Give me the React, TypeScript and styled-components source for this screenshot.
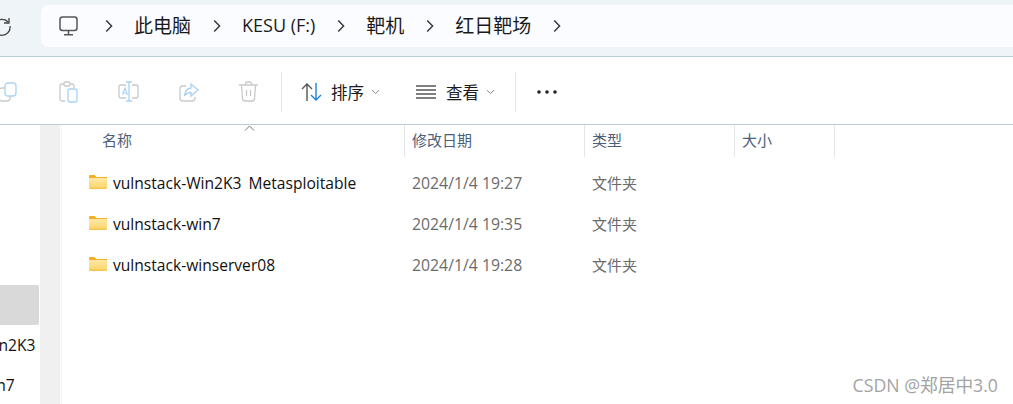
import styled, { createGlobalStyle } from 'styled-components';

const GlobalStyle = createGlobalStyle`
    html, body {
        margin: 0;
        padding: 0;
        background: #fff;
        overflow: hidden;
    }
    body {
        font-family: "Open Sans", "Noto Sans CJK SC", sans-serif;
    }
`;

const CJK = '"Noto Sans CJK SC", sans-serif';
const COLUMNS = '343px 180px 150px 100px';

const Window = styled.div`
    position: relative;
    width: 1013px;
    height: 404px;
    overflow: hidden;
    display: flex;
    flex-direction: column;
`;

const AddressRow = styled.div`
    height: 56px;
    flex: none;
    display: flex;
    background: #eff4f9;
    border-bottom: 1px solid #b9ccd9;
`;

const RefreshSlot = styled.div`
    width: 41px;
    flex: none;
    overflow: hidden;
    display: flex;
    justify-content: flex-end;
    padding: 16px 29px 0 0;
    box-sizing: border-box;

    svg {
        flex: none;
    }
`;

const AddressBox = styled.div`
    flex: 1;
    height: 42px;
    margin-top: 5px;
    background: #fafcff;
    border-radius: 7px 0 0 7px;
    display: flex;
    align-items: center;
    padding-left: 18px;
    gap: 21.5px;

    svg:first-child {
        margin-right: 5px;
    }
`;

const Crumb = styled.span<{ $latin?: boolean }>`
    font-family: ${(p) => (p.$latin ? '"Open Sans", sans-serif' : CJK)};
    font-size: ${(p) => (p.$latin ? '18px' : '19px')};
    color: #1a1a1a;
    line-height: 24px;
    white-space: nowrap;
    padding-bottom: 2px;
`;

const Toolbar = styled.div`
    height: 68px;
    flex: none;
    display: flex;
    align-items: center;
    background: #fff;
    border-bottom: 1px solid #b9ccd9;
    padding-top: 2px;
    box-sizing: border-box;
    overflow: hidden;
`;

const ActionIcons = styled.div`
    display: flex;
    align-items: center;
    gap: 40px;
    margin-left: -2px;

    svg:first-child {
        margin-right: 2px;
    }
`;

const Divider = styled.div<{ $left: number; $right: number }>`
    width: 1px;
    height: 40px;
    background: #e6e6e6;
    margin: 0 ${(p) => p.$right}px 0 ${(p) => p.$left}px;
    flex: none;
`;

const ToolButton = styled.div<{ $width: number }>`
    display: flex;
    align-items: center;
    width: ${(p) => p.$width}px;
    flex: none;
`;

const ToolLabel = styled.span<{ $gap: number }>`
    font-family: ${CJK};
    font-size: 16.5px;
    color: #1a1a1a;
    margin-left: ${(p) => p.$gap}px;
    line-height: 22px;
`;

const Caret = styled.span`
    display: flex;
    margin-left: 7px;
`;

const Body = styled.div`
    flex: 1;
    display: flex;
    min-height: 0;
`;

const Sidebar = styled.div`
    width: 40px;
    flex: none;
    overflow: hidden;
    padding-top: 160px;
    box-sizing: border-box;
`;

const SideItem = styled.div<{ $selected?: boolean }>`
    height: 40px;
    width: 39px;
    border-radius: 0 2px 2px 0;
    background: ${(p) => (p.$selected ? '#d9d9d9' : 'transparent')};
    display: flex;
    align-items: center;
    white-space: nowrap;
    overflow: hidden;
`;

const SideLabel = styled.span`
    font-size: 15.6px;
    color: #111;
    margin-left: -93px;
`;

const Track = styled.div`
    width: 20px;
    flex: none;
    background: #f0f0f0;
`;

const Gutter = styled.div`
    width: 1px;
    flex: none;
    margin-left: 1px;
    background: #f5f5f5;
`;

const Files = styled.div`
    flex: 1;
    min-width: 0;
`;

const HeaderRow = styled.div`
    display: grid;
    grid-template-columns: ${COLUMNS};
    height: 32px;
    margin-bottom: 5px;
`;

const HeaderCell = styled.div<{ $first?: boolean }>`
    font-family: ${CJK};
    font-size: 15px;
    color: #4c607a;
    display: flex;
    align-items: center;
    padding: 0 0 3px ${(p) => (p.$first ? 40 : 7)}px;
    border-right: ${(p) => (p.$first ? 'none' : '1px solid #e5e5e5')};
    box-shadow: ${(p) => (p.$first ? 'inset -1px 0 0 #e5e5e5' : 'none')};
`;

const FileRow = styled.div`
    display: grid;
    grid-template-columns: ${COLUMNS};
    height: 41px;
    align-items: center;
`;

const NameCell = styled.div`
    display: flex;
    align-items: center;
    padding-left: 27px;
    gap: 6px;
    font-size: 15.6px;
    word-spacing: 3px;
    color: #111;
    white-space: nowrap;

    svg {
        margin-bottom: 2px;
    }
`;

const DateCell = styled.div`
    font-size: 15.8px;
    color: #6b6b6b;
    padding-left: 7px;
`;

const TypeCell = styled.div`
    font-family: ${CJK};
    font-size: 15px;
    color: #6b6b6b;
    padding-left: 7px;
`;

const SortMark = styled.svg`
    position: absolute;
    left: 244px;
    top: 125px;
`;

const Watermark = styled.div`
    position: absolute;
    right: 15px;
    top: 373px;
    font-family: "Open Sans", ${CJK};
    font-size: 17.7px;
    line-height: 24px;
    color: #a3a3a3;
    white-space: nowrap;
`;

const Chevron = () => (
    <svg width="8" height="14" viewBox="0 0 8 14" fill="none">
        <path d="M1.2 1.5 6.6 7 1.2 12.5" stroke="#333" strokeWidth="1.4" />
    </svg>
);

const SmallCaret = () => (
    <svg width="9" height="6" viewBox="0 0 9 6" fill="none">
        <path d="M1 1.2 4.5 4.6 8 1.2" stroke="#888" strokeWidth="1" />
    </svg>
);

const Folder = () => (
    <svg width="18" height="14" viewBox="0 0 18 14">
        <defs>
            <linearGradient id="folderFront" x1="0" y1="0" x2="0" y2="1">
                <stop offset="0" stopColor="#ffe9a8" />
                <stop offset="0.8" stopColor="#fcd873" />
                <stop offset="1" stopColor="#f3bd3f" />
            </linearGradient>
        </defs>
        <path d="M0 1.2C0 .5.5 0 1.2 0h4.3l2 2H18v3H0z" fill="#f5b01f" />
        <path d="M0 3h16.8c.7 0 1.2.5 1.2 1.2v8.6c0 .7-.5 1.2-1.2 1.2H1.2C.5 14 0 13.5 0 12.8z" fill="url(#folderFront)" />
    </svg>
);

const files = [
    { name: 'vulnstack-Win2K3 Metasploitable', date: '2024/1/4 19:27' },
    { name: 'vulnstack-win7', date: '2024/1/4 19:35' },
    { name: 'vulnstack-winserver08', date: '2024/1/4 19:28' },
];

export default function App() {
    return (
        <Window>
            <GlobalStyle />
            <AddressRow>
                <RefreshSlot>
                    <svg width="20" height="20" viewBox="0 0 20 20" fill="none">
                        <path d="M16.5 6.5A8 8 0 1 0 18 10" stroke="#444" strokeWidth="1.3" />
                        <path d="M17 2v5h-5" stroke="#444" strokeWidth="1.3" />
                    </svg>
                </RefreshSlot>
                <AddressBox>
                    <svg width="19" height="20" viewBox="0 0 19 20" fill="none">
                        <rect x="1" y="1" width="17" height="13.5" rx="2.5" stroke="#555" strokeWidth="1.5" />
                        <path d="M9.5 15v3M5 18.7h9" stroke="#555" strokeWidth="1.5" />
                    </svg>
                    <Chevron />
                    <Crumb>此电脑</Crumb>
                    <Chevron />
                    <Crumb $latin>KESU (F:)</Crumb>
                    <Chevron />
                    <Crumb>靶机</Crumb>
                    <Chevron />
                    <Crumb>红日靶场</Crumb>
                    <Chevron />
                </AddressBox>
            </AddressRow>
            <Toolbar>
                <ActionIcons>
                    <svg width="19" height="20" viewBox="0 0 19 20" fill="none">
                        <rect x="1" y="6" width="11" height="13" rx="3" stroke="#c9c9c9" strokeWidth="1.3" />
                        <rect x="7" y="1" width="11" height="13" rx="3" fill="#fff" stroke="#a9d2f3" strokeWidth="1.3" />
                    </svg>
                    <svg width="19" height="22" viewBox="0 0 19 22" fill="none">
                        <path d="M11 3h2a2 2 0 0 1 2 2v2M6 20H3a2 2 0 0 1-2-2V5a2 2 0 0 1 2-2h2" stroke="#c9c9c9" strokeWidth="1.3" />
                        <rect x="5" y="1" width="6" height="4" rx="1.5" stroke="#c9c9c9" strokeWidth="1.3" />
                        <rect x="9" y="8" width="9" height="13" rx="2" stroke="#a9d2f3" strokeWidth="1.3" />
                    </svg>
                    <svg width="21" height="21" viewBox="0 0 21 21" fill="none">
                        <path d="M8 4H3a2 2 0 0 0-2 2v9a2 2 0 0 0 2 2h5M14 4h4a2 2 0 0 1 2 2v9a2 2 0 0 1-2 2h-4" stroke="#c9c9c9" strokeWidth="1.3" />
                        <path d="M11 1v19M8 1h6M8 20h6" stroke="#a9d2f3" strokeWidth="1.3" />
                        <path d="M4.5 14 7 7l2.5 7M5.3 12h3.4" stroke="#a9d2f3" strokeWidth="1.1" />
                    </svg>
                    <svg width="20" height="20" viewBox="0 0 20 20" fill="none">
                        <path d="M7 4H4a3 3 0 0 0-3 3v9a3 3 0 0 0 3 3h9a3 3 0 0 0 3-3v-1" stroke="#c9c9c9" strokeWidth="1.3" />
                        <path d="M12 2l7 6-7 6v-3.5c-3 0-5 1-6.5 3.500.3-4.500 2.500-7.500 6.500-8z" stroke="#a9d2f3" strokeWidth="1.3" />
                    </svg>
                    <svg width="19" height="21" viewBox="0 0 19 21" fill="none" stroke="#c9c9c9" strokeWidth="1.3">
                        <path d="M0 4h19M6.5 4V3a2 2 0 0 1 2-2h2a2 2 0 0 1 2 2v1" />
                        <path d="M2.5 4l1 14a2.5 2.5 0 0 0 2.5 2h7a2.5 2.5 0 0 0 2.5-2l1-14" />
                        <path d="M7.5 9v6M11.5 9v6" />
                    </svg>
                </ActionIcons>
                <Divider $left={23} $right={19} />
                <ToolButton $width={115}>
                    <svg width="21" height="20" viewBox="0 0 21 20" fill="none">
                        <path d="M6 19V2M1 7l5-5 5 5" stroke="#555" strokeWidth="1.4" />
                        <path d="M15 1v17M10 13l5 5 5-5" stroke="#1c84d8" strokeWidth="1.4" />
                    </svg>
                    <ToolLabel $gap={9}>排序</ToolLabel>
                    <Caret>
                        <SmallCaret />
                    </Caret>
                </ToolButton>
                <ToolButton $width={99}>
                    <svg width="20" height="14" viewBox="0 0 20 14" fill="none" stroke="#555" strokeWidth="1.3">
                        <path d="M0 1h20M0 5h20M0 9h20M0 13h20" />
                    </svg>
                    <ToolLabel $gap={10}>查看</ToolLabel>
                    <Caret>
                        <SmallCaret />
                    </Caret>
                </ToolButton>
                <Divider $left={0} $right={21} />
                <svg width="20" height="4" viewBox="0 0 20 4" fill="#222">
                    <circle cx="2" cy="2" r="1.8" />
                    <circle cx="10" cy="2" r="1.8" />
                    <circle cx="18" cy="2" r="1.8" />
                </svg>
            </Toolbar>
            <Body>
                <Sidebar>
                    <SideItem $selected />
                    <SideItem>
                        <SideLabel>vulnstack-Win2K3</SideLabel>
                    </SideItem>
                    <SideItem>
                        <SideLabel>vulnstack-win7</SideLabel>
                    </SideItem>
                </Sidebar>
                <Track />
                <Gutter />
                <Files>
                    <HeaderRow>
                        <HeaderCell $first>名称</HeaderCell>
                        <HeaderCell>修改日期</HeaderCell>
                        <HeaderCell>类型</HeaderCell>
                        <HeaderCell>大小</HeaderCell>
                    </HeaderRow>
                    {files.map((file) => (
                        <FileRow key={file.name}>
                            <NameCell>
                                <Folder />
                                {file.name}
                            </NameCell>
                            <DateCell>{file.date}</DateCell>
                            <TypeCell>文件夹</TypeCell>
                        </FileRow>
                    ))}
                </Files>
            </Body>
            <SortMark width="11" height="6" viewBox="0 0 11 6" fill="none">
                <path d="M1 5.5 5.5 1 10 5.5" stroke="#777" strokeWidth="1" />
            </SortMark>
            <Watermark>CSDN @郑居中3.0</Watermark>
        </Window>
    );
}
